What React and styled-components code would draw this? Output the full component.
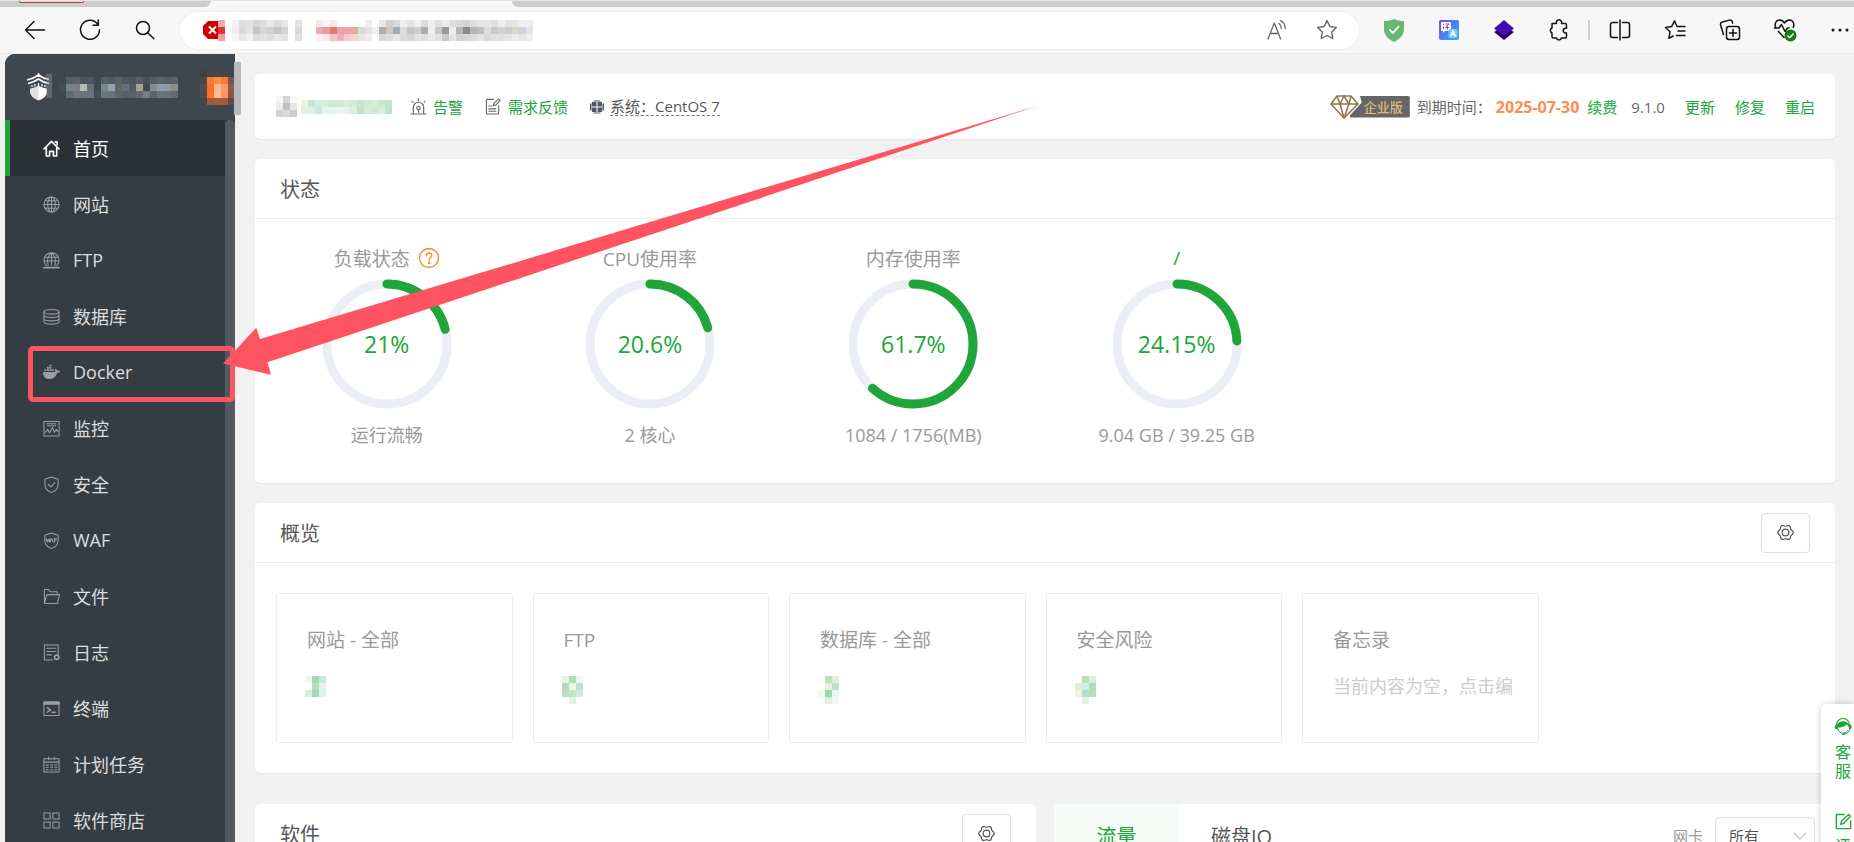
import React, { useState } from 'react';
import styled, { createGlobalStyle } from 'styled-components';

const GREEN = '#20a53a';
const MARK = '#ff5362';

// small colour grids used where names and addresses are masked, '.' is an empty cell
const MASKS = {
  lock: [['#f2a9a9'], ['#dc3a3a'], ['#f0a0a0']],
  site: [
    ['#f2f2f2', '#dedede', '#e2e2e2', '#d6d6d6', '#dcdcdc', '#e8e8e8', '#dcdcdc', '#e6e6e6'],
    ['#ededed', '#dadada', '#e4e4e4', '#c4c4c4', '#d6d6d6', '#d0d0d0', '#c6c6c6', '#d2d2d2'],
    ['#f5f5f5', '#e6e6e6', '#f2f2f2', '#dcdcdc', '#e2e2e2', '#dedede', '#e8e8e8', '#e2e2e2'],
  ],
  bar: [['#e2e2e2'], ['#d8d8d8'], ['#e2e2e2']],
  url: [
    ['#fbe6e6', '#fdf3f3', '#fbe6e6', '.', '.', '.', '.', '#eeeeee', '.', '#e8e8e8', '#cfcfcf', '#d8d8d8', '#eeeeee', '#e4e4e4', '#f0f0f0', '#dcdcdc', '#eeeeee', '#e0e0e0', '#ececec', '#e0e0e0', '#dadada', '#d2d2d2', '#dedede', '#e4e4e4', '#e6e6e6', '#dedede', '#eeeeee', '#e2e2e2', '#e6e6e6', '#f0f0f0', '#ececf2'],
    ['#eeabab', '#e99c9c', '#e37a76', '#eca3a3', '#eba3a3', '#eda6a6', '#d9d9d9', '#e2e2e2', '#f0f0f0', '#b9aca4', '#c9c9c9', '#a4acb4', '#dadada', '#c4c4c4', '#d4cbc5', '#a5adb5', '#f3efe8', '#c8c8cc', '#9297a0', '#f3eee4', '#b4b6ba', '#888a93', '#b6b6b6', '#bfbfc2', '#dedede', '#c9c9c9', '#d2d2d2', '#cccccc', '#d8d8cf', '#cfd2dc', '#e2e2e8'],
    ['#fdf0f0', '#fbe6e6', '#f3c6c6', '#e9b2b6', '#f3cccc', '#f5d3d3', '#e6e6e6', '#ececec', '.', '#d6d6d6', '#dedede', '#e6e6e6', '#dadada', '#d4d4d4', '#e2e2e2', '#dedede', '#e8e8e8', '#e0e0e0', '#c8c8c8', '#e4e4e4', '#d2d2d2', '#d6d6d6', '#dcdcdc', '#e6e6e6', '#dadada', '#e2e2e2', '#e0e0e0', '#e4e4e4', '#ececec', '#e4e4ea', '#eeeeee'],
  ],
  panel: [
    ['.', '#535b63', '#5b626a', '#4b535c', '#4f575f', '.', '#565e66', '#4f5760', '#5a6168', '#4f575f', '#4c545c', '#565d65', '#4a525b', '#545b63', '#5a6169', '#555d65', '#5b6269'],
    ['#454d56', '#728690', '#7a8087', '#b7b9b5', '#686f77', '.', '#75888f', '#92a4ae', '#62645f', '#64707c', '#525a63', '#a5a199', '#414a53', '#8a8b91', '#8d9dab', '#909a9f', '#898e89'],
    ['.', '#5b6a73', '#6f7680', '#6c7379', '#6c727b', '#454d56', '#687980', '#6b757b', '#5f6772', '#555f69', '#5a6269', '#626970', '#757c85', '#5b636b', '#67757d', '#68727a', '#64696c'],
  ],
  badge: [
    ['#3f4349', '#474549', '#474549', '#474549', '#3f434a'],
    ['#4a474a', '#fb7a35', '#ff8d4a', '#fd7a33', '#75544a'],
    ['#5c4b47', '#ff6e24', '#ffb78f', '#fc9c66', '#8c5c46'],
    ['#544a48', '#fd7128', '#ffbc97', '#ff9558', '#8c5a44'],
    ['#42454a', '#9c5a3c', '#a45b3a', '#a25b3c', '#5f4c47'],
  ],
  user: [
    ['#f6f6f6', '#d4d4d4', '#f8f8f8'],
    ['#ececec', '#c0c0c0', '#e8e8e8'],
    ['#d2d2d2', '#dadada', '#cccccc'],
  ],
  account: [
    ['#e8f3e4', '#c4e6cf', '#d3eee2', '#d3ecdc', '#cfead4', '#d3ead9', '#d8eedd', '#d3ead9', '#c8e6ce', '#cfe9d2', '#d4ecd9', '#cde8d0', '#c2e4cf'],
    ['#e3f1dc', '#dff1e6', '#cbe9dc', '#e2f3e8', '#e9f5ec', '#eaf5ec', '#e6f3e8', '#dceede', '#bfe2c2', '#d6ecda', '#cde9d4', '#d8eedd', '#bce3cf'],
  ],
  sites: [['#f1f7ee', '#a9d9b3', '#c5e9db'], ['.', '#b9dfba', '#e0f3ec'], ['#e0edd6', '#a2dbb9', '#dff2ea']],
  ftp: [['#e6f2e2', '#b0dcb8', '#f0f9f6'], ['#b3ddba', '#f2f3e3', '#b7e4d0'], ['#bcdfba', '#c4e6c4', '#cdebe0'], ['.', '#e2f3e6', '.']],
  db: [['#fbfdfa', '#bce1bd', '#d9efe3'], ['.', '#e5f1dc', '#b9e2cb'], ['#f2f7ea', '#9bd5aa', '#eaf7f0'], ['#fafcf8', '#dcf0df', '#f0faf5']],
  risk: [['#fdfdfb', '#b9dfbb', '#d7efe3'], ['#e0edd2', '#d0edea', '#b1dcbb'], ['#ebf3e0', '#b4e2c9', '#b5dfbb'], ['.', '#e1f2e3', '#f9fdfb']],
};

const Mask = ({ name }) => {
  const rows = MASKS[name];
  return (
    <svg width={rows[0].length * 7} height={rows.length * 7} shapeRendering="crispEdges" aria-hidden="true">
      {rows.map((row, y) =>
        row.map((c, x) => c !== '.' && <rect key={`${x}-${y}`} x={x * 7} y={y * 7} width="7" height="7" fill={c} />)
      )}
    </svg>
  );
};

const Icon = ({ size = 18, width = 1.2, box = 18, children }) => (
  <svg
    width={size}
    height={size}
    viewBox={`0 0 ${box} ${box}`}
    fill="none"
    stroke="currentColor"
    strokeWidth={width}
    strokeLinecap="round"
    strokeLinejoin="round"
    aria-hidden="true"
  >
    {children}
  </svg>
);

const STAR = 'M11 1.6l2.9 5.9 6.5.9-4.7 4.6 1.1 6.5-5.8-3-5.8 3 1.1-6.5L1.6 8.4l6.5-.9z';

// six rounded teeth around the centre of an 18px box
const GEAR = Array.from({ length: 72 }, (_, i) => {
  const a = (i * Math.PI) / 36;
  const r = 7.4 + 0.8 * Math.cos(6 * a);
  return `${(9 + r * Math.cos(a)).toFixed(2)},${(9 + r * Math.sin(a)).toFixed(2)}`;
}).join(' ');

const BackIcon = () => (
  <Icon size={22} box={22} width={1.5}><path d="M20.5 11H1.5M10 2.5L1.5 11l8.5 8.5" /></Icon>
);
const ReloadIcon = () => (
  <Icon size={22} box={22} width={1.5}><path d="M18.7 5.2A9.5 9.5 0 1 0 20.5 11M19.3 1v5.2h-5.2" /></Icon>
);
const SearchIcon = () => (
  <Icon size={20} box={20} width={1.5}><circle cx="8" cy="8" r="6.5" /><path d="M12.8 12.8l6 6" /></Icon>
);
const StopIcon = () => (
  <svg width="15" height="20" viewBox="0 0 15 20" aria-hidden="true">
    <path d="M5 1h10v18H5L0 14V6z" fill="#cc0000" />
    <path d="M6 6.5l7 7M13 6.5l-7 7" stroke="#fff" strokeWidth="2" />
  </svg>
);
const ReadIcon = () => (
  <Icon size={22} box={22} width={1.3}>
    <path d="M2 20L8.3 4l6.3 16M4.2 14.5h8.2M13 4.5a6 6 0 0 1 2.3 5M14.5 1.5a9.5 9.5 0 0 1 4.7 8" />
  </Icon>
);
const StarIcon = () => (
  <Icon size={22} box={22} width={1.4}><path d={STAR} /></Icon>
);
const ShieldIcon = () => (
  <svg width="20" height="24" viewBox="0 0 20 24" aria-hidden="true">
    <path d="M10 1C7 2.5 4 3 0 3v8c0 6 4 10 10 13 6-3 10-7 10-13V3C16 3 13 2.5 10 1z" fill="#66b873" />
    <path d="M5.5 11.5l3.5 3.5 6-7" fill="none" stroke="#fff" strokeWidth="1.8" />
  </svg>
);
const TranslateIcon = () => (
  <svg width="20" height="20" viewBox="0 0 20 20" aria-hidden="true">
    <defs>
      <linearGradient id="tr" x1="0" y1="0" x2="1" y2="1">
        <stop offset="0" stopColor="#7a48e8" />
        <stop offset="1" stopColor="#22b8fa" />
      </linearGradient>
    </defs>
    <rect width="20" height="20" rx="2" fill="url(#tr)" />
    <path d="M3 2h8q1 0 1 1v7q0 1-1 1H6l-2 2v-2H3q-1 0-1-1V3q0-1 1-1z" fill="#fff" />
    <path d="M4 4.500h1M4.500 6.500v2.500M6.500 4h3.500l-3 2.500M6.500 7.500H10M8.300 6v3.500" stroke="#8b3fe0" fill="none" />
    <rect x="9.500" y="9" width="9" height="9" rx="1.500" fill="#7cc4f8" />
    <path d="M11.500 16.500l2.500-6 2.500 6M12.500 14.500h3" stroke="#fff" strokeWidth="1.300" fill="none" />
  </svg>
);
const LayersIcon = () => (
  <svg width="20" height="20" viewBox="0 0 20 20" aria-hidden="true">
    <path d="M0 12l10-6 10 6-10 8z" fill="#1b0570" />
    <path d="M10 0l10 8.500L10 16 0 8.500z" fill="#470ab0" />
  </svg>
);
const PuzzleIcon = () => (
  <Icon size={22} box={22} width={1.5}>
    <path d="M4 4.500h4.500a2.700 2.700 0 1 1 5 0H17a1.500 1.500 0 0 1 1.500 1.500v3.300h-1a2.300 2.300 0 0 0 0 4.600h1v3.600a1.500 1.500 0 0 1-1.500 1.500h-3.500a2.600 2.600 0 0 1-5 0H5.500A1.500 1.500 0 0 1 4 17.500V14a2.700 2.700 0 0 1 0-5z" />
  </Icon>
);
const SplitIcon = () => (
  <Icon size={22} box={22} width={1.5}>
    <path d="M8.500 3.500H3.500a2 2 0 0 0-2 2v11a2 2 0 0 0 2 2h5M13.500 3.500h5a2 2 0 0 1 2 2v11a2 2 0 0 1-2 2h-5M11 1v20" />
  </Icon>
);
const FavIcon = () => (
  <Icon size={22} box={22} width={1.5}>
    <path d="M13 7.500L10.500 1.800 7.600 7.600 1.500 8.500l4.500 4.300-1.100 6.500 4.300-2.300M13 7.500h8M14 12h7M12.500 16.500h8.500" />
  </Icon>
);
const CollectIcon = () => (
  <Icon size={22} box={22} width={1.5}>
    <path d="M4.500 15.500L1.600 6a2.500 2.500 0 0 1 1.700-3l7-1.900a2.500 2.500 0 0 1 3 1.700l.3 1.200" />
    <rect x="7.500" y="7.500" width="13" height="13" rx="2.500" />
    <path d="M14 10.500v7M10.500 14h7" />
  </Icon>
);
const HealthIcon = () => (
  <svg width="24" height="24" viewBox="0 0 24 24" fill="none" stroke="#111" strokeWidth="1.5" strokeLinejoin="round" aria-hidden="true">
    <path d="M3 10C1 6 3 2 6.500 2 9 2 10.500 3.500 11.500 5 12.500 3.500 14 2 16.500 2 20 2 22 6 20 10M1 10h5l2.500-3.500 3.500 7 2.500-3.500h2M5 13l6.500 7" />
    <circle cx="17.500" cy="17.500" r="6" fill="#107c10" stroke="none" />
    <path d="M14.500 17.500l2.200 2.200 3.800-4.200" stroke="#fff" />
  </svg>
);
const MoreIcon = () => (
  <svg width="18" height="4" viewBox="0 0 18 4" fill="#111" aria-hidden="true">
    <circle cx="2" cy="2" r="1.5" /><circle cx="9" cy="2" r="1.5" /><circle cx="16" cy="2" r="1.5" />
  </svg>
);

const LogoIcon = () => (
  <svg width="25" height="28" viewBox="0 0 25 28" aria-hidden="true">
    <path d="M3 12v7q0 5 8.500 8.500Q20 24 20 19v-7z" fill="#e2e2e4" />
    <path d="M11.500 12H20v7q0 5-8.500 8.500z" fill="#fff" />
    <path d="M0 7.500Q7 6 11.500 2.500 16 6 22 7M1 11q6.500-1.500 10.500-4.500Q16 10 22 11M3 14q5-1 8.500-3.500Q15 13 20 14" fill="none" stroke="#3e464f" strokeWidth="3.500" />
    <path d="M0 7Q7 5.500 11.500 2 16 5.500 22 6.500M1 10.500Q7.500 9 11.500 6 16 9.500 22 10.500" fill="none" stroke="#fff" strokeWidth="1.600" />
    <path d="M11.500 0v4" stroke="#fff" strokeWidth="1.5" />
    <path d="M5 12v2M8 11v2.500M11.500 10v3M15 11v2.500M18 12v2" stroke="#fff" strokeWidth="1.300" />
    <path d="M19 1h6v24h-6z" fill="#8b9097" opacity=".45" />
  </svg>
);

const MENU_ICONS = {
  home: <path d="M1 9.500L9 1.500l8 8M3.500 8.500V17h3.500v-5h4v5h3.500V8.500M13 2h2v3" strokeWidth="1.700" />,
  site: <><circle cx="9" cy="9" r="8" /><ellipse cx="9" cy="9" rx="4" ry="8" /><path d="M9 1v16M1 9h16M2.500 5h13M2.500 13h13" /></>,
  ftp: <><path d="M3.500 14.500a8 8 0 1 1 11 0M5.500 14.500C4 8 6 3 9 1M12.500 14.500C14 8 12 3 9 1M9 1v13M1.500 9.500h15M2.500 5.500h13" /><path d="M1 16.500h16" strokeWidth="1.800" /></>,
  db: <><ellipse cx="9" cy="4" rx="8" ry="2.500" /><path d="M1 4v10.500C1 18 17 18 17 14.500V4M1 7.500C1 11 17 11 17 7.500M1 11c0 3.500 16 3.500 16 0" /></>,
  docker: (
    <path
      d="M0 8.500h12.500c.8-.4.600-2 0-2.800 1-1 2.200.2 2.300 1.400 1-.3 2.400 0 3.200.6-.5 1.200-1.700 1.600-3 1.600C13.500 13.500 11 16 7 16 2.500 16 0 13.500 0 8.500zM1.500 5.500h2v2h-2zM4.200 5.500h2v2h-2zM6.900 5.500h2v2h-2zM9.500 5.500h2v2h-2zM4.200 3h2v2h-2zM6.900 3h2v2h-2zM6.900 .8h2v1.700h-2z"
      fill="currentColor"
      stroke="none"
    />
  ),
  monitor: <><rect x="1" y="1.500" width="16" height="15.500" /><path d="M4.500 4h9M4.500 6h9M2.500 13l2.500-3 2 3.500 3-5.500 2 5 2-3 2 2.500" /></>,
  safe: <><path d="M9 1l7 2.500v6c0 4-3.500 6.500-7 8-3.500-1.500-7-4-7-8v-6z" /><path d="M5.500 9l3 2.500 4-4.500" /></>,
  waf: <><path d="M9 1l7 2.500v6c0 4-3.500 6.500-7 8-3.500-1.500-7-4-7-8v-6z" /><path d="M3.500 7l1 3.500L5.500 8l1 2.500 1-3.500M7.500 10.500L9 7l1.500 3.500M12 10.500V7h2.300M12 8.800h2" /></>,
  file: <path d="M1.500 16.500v-15H6l1.500 2.500H15v3M1.500 16.500L4 7h13.500l-2.300 9.500z" />,
  log: <><path d="M10 17H1.500V1H16v9.500M4 4.500h9.500M4 8h9.500M4 11.500h5" /><circle cx="14.500" cy="14" r="2.300" strokeWidth="1.800" /></>,
  term: <><path d="M1 2h16v14.500H1z" /><path d="M1.500 3.500h15" strokeWidth="3" /><path d="M4.500 8l3.500 2.500L4.500 13M9.500 13h3.500" strokeWidth="1.5" /></>,
  cron: <><path d="M1 3h16v14H1zM1 6.500h16M6 1v3M12 1v3" /><path d="M3 9.500h3M7.500 9.500h3M12 9.500h3M3 12h3M7.500 12h3M12 12h3M3 14.500h3M7.500 14.500h3M12 14.500h3" strokeLinecap="butt" /></>,
  store: <path d="M1 1h6.500v6.500H1zM10.500 1H17v6.500h-6.500zM1 10.500h6.500V17H1zM10.500 10.500H17V17h-6.500z" />,
};

const AlarmIcon = () => (
  <Icon size={17}><path d="M3.500 16.500V10a5.500 5.500 0 0 1 11 0v6.500M1 17h16M9 .8v2M2 3.500l1 1M16 3.500l-1 1M9 12.500V15" /><circle cx="9" cy="10.500" r="1.800" /></Icon>
);
const FeedbackIcon = () => (
  <Icon size={17}><path d="M9 1.500H2.500a1 1 0 0 0-1 1v13.500a1 1 0 0 0 1 1h11a1 1 0 0 0 1-1V8M4 8.500h3.500M4 11.500h7.500M4 14h7.500M9 8l.5-2.500 5-4.500 1.500 1.500-4.500 5z" /></Icon>
);
const SystemIcon = () => (
  <svg width="14" height="14" viewBox="0 0 14 14" fill="#50575e" aria-hidden="true">
    <path d="M2 2h4.500v4.500H2zM7.500 2H12v4.500H7.500zM2 7.500h4.500V12H2zM7.500 7.500H12V12H7.500z" />
    <path d="M3.500 1.500V.5h7v1zM3.500 12.500v1h7v-1zM1.500 3.500H0v7h1.500zM12.500 3.500H14v7h-1.500z" />
  </svg>
);
const DiamondIcon = () => (
  <svg width="30" height="24" viewBox="0 0 30 24" fill="#fff" stroke="#8f7647" strokeWidth="1.5" strokeLinejoin="round" aria-hidden="true">
    <path d="M7 1h14l7 8-14 14L1 9z" />
    <path d="M1 9h27M7 1l3 8 4 14 5-14 2-8M10 9l4-8 5 8" fill="none" />
  </svg>
);
const HelpIcon = () => (
  <Icon size={22} box={22} width={1.3}>
    <circle cx="11" cy="11" r="9.500" />
    <path d="M8.300 8.800c0-3.800 5.500-3.600 5.500-.3 0 2-2.700 2.200-2.700 4.500" />
    <circle cx="11.100" cy="15.800" r=".6" fill="currentColor" />
  </Icon>
);
const GearIcon = () => (
  <Icon size={17} width={1.3}>
    <polygon points={GEAR} />
    <circle cx="9" cy="9" r="3.500" />
  </Icon>
);
const ServiceIcon = () => (
  <svg width="18" height="18" viewBox="0 0 18 18" aria-hidden="true">
    <path d="M2.500 7a6.500 6.500 0 0 1 13 0" fill="none" stroke={GREEN} strokeWidth="1.200" />
    <path d="M3 6.500C5 2 13 2 15 6.500l2 .5q1.500 2 0 4h-2c0-2-1-3.500-2-4.500-3 2.500-6 3-9 3v1.500H1.500Q0 9 1.500 7z" fill={GREEN} />
    <path d="M4 11c1 5.500 8 5.500 10 1M15.500 11c0 3-2 4.500-5 5" fill="none" stroke={GREEN} />
    <circle cx="9.500" cy="16" r="1.300" fill={GREEN} />
  </svg>
);
const EditIcon = () => (
  <Icon size={17} width={1.5}><path d="M9.500 1.500h-8v15h15v-8M6 12l1-3.500 7.500-7 2 2-7.500 7.500zM6 12l2-.5" /></Icon>
);

const menu = [
  { key: 'home', label: '首页' },
  { key: 'site', label: '网站' },
  { key: 'ftp', label: 'FTP' },
  { key: 'db', label: '数据库' },
  { key: 'docker', label: 'Docker', marked: true },
  { key: 'monitor', label: '监控' },
  { key: 'safe', label: '安全' },
  { key: 'waf', label: 'WAF' },
  { key: 'file', label: '文件' },
  { key: 'log', label: '日志' },
  { key: 'term', label: '终端' },
  { key: 'cron', label: '计划任务' },
  { key: 'store', label: '软件商店' },
];

const gauges = [
  { label: '负载状态', value: 21, note: '运行流畅', help: true },
  { label: 'CPU使用率', value: 20.6, note: '2 核心' },
  { label: '内存使用率', value: 61.7, note: '1084 / 1756(MB)' },
  { label: '/', value: 24.15, note: '9.04 GB / 39.25 GB', green: true },
];

const overview = [
  { title: '网站 - 全部', mask: 'sites' },
  { title: 'FTP', mask: 'ftp' },
  { title: '数据库 - 全部', mask: 'db' },
  { title: '安全风险', mask: 'risk' },
];

const Ring = ({ value }) => {
  const len = 2 * Math.PI * 60;
  return (
    <svg width="130" height="130" viewBox="0 0 130 130" fill="none" strokeWidth="9" aria-hidden="true">
      <circle cx="65" cy="65" r="60" stroke="#ebeef5" />
      <circle
        cx="65"
        cy="65"
        r="60"
        stroke={GREEN}
        strokeLinecap="round"
        strokeDasharray={`${(len * value) / 100} ${len}`}
        transform="rotate(-90 65 65)"
      />
    </svg>
  );
};

export default function App() {
  const [active, setActive] = useState('home');
  const [tab, setTab] = useState('flow');

  return (
    <Page>
      <GlobalStyle />
      <TabStrip>
        <InactiveTab $side="left"><TabGroup /></InactiveTab>
        <InactiveTab $side="right" />
      </TabStrip>
      <Toolbar>
        <ToolButton aria-label="Back"><BackIcon /></ToolButton>
        <ToolButton aria-label="Reload"><ReloadIcon /></ToolButton>
        <ToolButton aria-label="Search"><SearchIcon /></ToolButton>
        <AddressBar>
          <MaskGroup><StopIcon /><Mask name="lock" /></MaskGroup>
          <Mask name="site" />
          <Mask name="bar" />
          <UrlMask><Mask name="url" /></UrlMask>
          <AddressActions>
            <SmallButton aria-label="Read aloud"><ReadIcon /></SmallButton>
            <SmallButton aria-label="Favorite"><StarIcon /></SmallButton>
          </AddressActions>
        </AddressBar>
        <ToolButton aria-label="Shield"><ShieldIcon /></ToolButton>
        <ToolButton aria-label="Translate"><TranslateIcon /></ToolButton>
        <ToolButton aria-label="Layers"><LayersIcon /></ToolButton>
        <ToolButton aria-label="Extensions"><PuzzleIcon /></ToolButton>
        <Separator />
        <ToolButton aria-label="Split screen"><SplitIcon /></ToolButton>
        <ToolButton aria-label="Favorites"><FavIcon /></ToolButton>
        <ToolButton aria-label="Collections"><CollectIcon /></ToolButton>
        <ToolButton aria-label="Browser essentials"><HealthIcon /></ToolButton>
        <MoreButton aria-label="More"><MoreIcon /></MoreButton>
      </Toolbar>

      <Body>
        <Sidebar>
          <SideHeader>
            <LogoIcon />
            <Mask name="panel" />
            <BadgeMask><Mask name="badge" /></BadgeMask>
            <SideThumb />
          </SideHeader>
          <SideScroll>
            <Menu>
              {menu.map((item) => (
                <li key={item.key}>
                  <MenuLink href={`#${item.key}`} $active={active === item.key} onClick={() => setActive(item.key)}>
                    <Icon size={17} width={1.1}>{MENU_ICONS[item.key]}</Icon>
                    {item.label}
                    {item.marked && <Highlight />}
                  </MenuLink>
                </li>
              ))}
            </Menu>
            <ScrollTrack />
          </SideScroll>
        </Sidebar>

        <Main>
          <InfoBar>
            <Account>
              <Mask name="user" />
              <Mask name="account" />
            </Account>
            <InfoLink href="#alarm"><AlarmIcon /><span>告警</span></InfoLink>
            <InfoLink href="#feedback"><FeedbackIcon /><span>需求反馈</span></InfoLink>
            <InfoItem><SystemIcon /><Dashed>系统：CentOS 7</Dashed></InfoItem>
            <License>
              <DiamondIcon />
              <Edition>企业版</Edition>
            </License>
            <Expire>到期时间：</Expire>
            <ExpireDate>2025-07-30</ExpireDate>
            <RenewLink href="#renew">续费</RenewLink>
            <Version>9.1.0</Version>
            <ActionLink href="#update">更新</ActionLink>
            <ActionLink href="#repair">修复</ActionLink>
            <ActionLink href="#restart">重启</ActionLink>
          </InfoBar>

          <Card>
            <CardHeader><CardTitle>状态</CardTitle></CardHeader>
            <Gauges>
              {gauges.map((g) => (
                <Gauge key={g.label}>
                  <GaugeLabel $green={g.green}>
                    {g.label}
                    {g.help && <HelpIcon />}
                  </GaugeLabel>
                  <Dial>
                    <Ring value={g.value} />
                    <Percent>{g.value}%</Percent>
                  </Dial>
                  <GaugeNote>{g.note}</GaugeNote>
                </Gauge>
              ))}
            </Gauges>
          </Card>

          <Card>
            <CardHeader>
              <CardTitle>概览</CardTitle>
              <GearButton aria-label="概览设置"><GearIcon /></GearButton>
            </CardHeader>
            <Tiles>
              {overview.map((o) => (
                <Tile key={o.title}>
                  <TileTitle>{o.title}</TileTitle>
                  <TileMask><Mask name={o.mask} /></TileMask>
                </Tile>
              ))}
              <Tile>
                <TileTitle>备忘录</TileTitle>
                <Memo>当前内容为空，点击编</Memo>
              </Tile>
            </Tiles>
          </Card>

          <BottomRow>
            <Card>
              <CardHeader>
                <CardTitle>软件</CardTitle>
                <GearButton aria-label="软件设置"><GearIcon /></GearButton>
              </CardHeader>
            </Card>
            <Card>
              <TabHeader>
                <TabButton $active={tab === 'flow'} onClick={() => setTab('flow')}>流量</TabButton>
                <TabButton $active={tab === 'disk'} onClick={() => setTab('disk')}>磁盘IO</TabButton>
                <NetLabel htmlFor="net">网卡</NetLabel>
                <SelectBox>
                  <NetSelect id="net"><option>所有</option></NetSelect>
                  <Icon size={14} width={1.5}><path d="M1.500 5l7.500 8 7.500-8" /></Icon>
                </SelectBox>
              </TabHeader>
            </Card>
          </BottomRow>
        </Main>
      </Body>

      <FloatPanel>
        <FloatLink href="#service"><ServiceIcon /><span>客服</span></FloatLink>
        <FloatLink href="#review"><EditIcon /><span>评价</span></FloatLink>
      </FloatPanel>

      <Pointer width="814" height="269" viewBox="0 0 814 269" aria-hidden="true">
        <path d="M0 257.500L33.300 221.700 37 233 814 0 44.500 256.300 48 268.700z" fill={MARK} />
      </Pointer>
    </Page>
  );
}

const GlobalStyle = createGlobalStyle`
  * {
    box-sizing: border-box;
  }
  body {
    margin: 0;
    background: #f1f1f1;
    color: #666;
    font-family: "Open Sans", "Noto Sans CJK SC", sans-serif;
    font-size: 15px;
    overflow: hidden;
  }
  button, select {
    font-family: inherit;
    cursor: pointer;
  }
  a {
    text-decoration: none;
  }
  svg {
    display: block;
    flex: none;
  }
`;

const Page = styled.div`
  position: relative;
  display: flex;
  flex-direction: column;
  height: 100vh;
  overflow: hidden;
`;

const TabStrip = styled.div`
  display: flex;
  flex: none;
  justify-content: space-between;
  height: 7px;
  background: #f7f7f7;
  border-top: 1px solid #e4e4e4;
`;

const InactiveTab = styled.div`
  width: ${({ $side }) => ($side === 'left' ? '211px' : 'calc(100% - 512px)')};
  padding-left: 19px;
  background: #cdcdcd;
  border-radius: ${({ $side }) => ($side === 'left' ? '0 0 8px 0' : '0 0 0 8px')};
`;

const TabGroup = styled.div`
  width: 65px;
  height: 2px;
  background: #f0dedd;
  border: 1px solid #b93a30;
  border-top: 0;
  border-radius: 0 0 6px 6px;
`;

const Toolbar = styled.div`
  display: flex;
  flex: none;
  align-items: center;
  height: 47px;
  padding-left: 7px;
  background: #f7f7f7;
  border-bottom: 1px solid #ececec;
`;

const ToolButton = styled.button`
  display: flex;
  flex: none;
  align-items: center;
  justify-content: center;
  width: 55px;
  height: 40px;
  padding: 0;
  color: #111;
  background: none;
  border: 0;
`;

const MoreButton = styled(ToolButton)`
  margin-right: -13px;
`;

const SmallButton = styled(ToolButton)`
  width: 50px;
  height: 36px;
  color: #666;
`;

const Separator = styled.div`
  width: 2px;
  height: 20px;
  margin: 0 2px;
  background: #cfcfcf;
`;

const AddressBar = styled.div`
  display: flex;
  flex: 1;
  align-items: center;
  gap: 7px;
  height: 37px;
  margin: 0 7px 0 8px;
  padding-left: 23px;
  background: #fff;
  border-radius: 19px;
  box-shadow: 0 0 3px rgba(0, 0, 0, 0.08);
`;

const MaskGroup = styled.div`
  display: flex;
  align-items: center;
`;

const UrlMask = styled.div`
  margin-left: 7px;
`;

const AddressActions = styled.div`
  display: flex;
  margin-left: auto;
  padding-right: 7px;
`;

const Body = styled.div`
  display: flex;
  flex: 1;
  min-height: 0;
`;

const Sidebar = styled.nav`
  display: flex;
  flex: none;
  flex-direction: column;
  width: 230px;
  margin-left: 5px;
  color: #e0e1e2;
  background: #353d44;
  border-radius: 10px 0 0 0;
`;

const SideHeader = styled.div`
  position: relative;
  display: flex;
  flex: none;
  align-items: center;
  gap: 7px;
  height: 66px;
  padding-left: 22px;
  background: #3e464f;
  border-radius: 10px 0 0 0;
`;

const BadgeMask = styled.div`
  margin-left: auto;
`;

const SideThumb = styled.div`
  position: absolute;
  top: 8px;
  right: -6px;
  width: 7px;
  height: 53px;
  background: #b5b8bc;
`;

const SideScroll = styled.div`
  display: flex;
  flex: 1;
  min-height: 0;
`;

const Menu = styled.ul`
  flex: 1;
  margin: 0;
  padding: 0;
  list-style: none;
`;

const ScrollTrack = styled.div`
  width: 10px;
  background: #535961;
  border-radius: 5px 5px 0 0;
`;

const MenuLink = styled.a`
  position: relative;
  display: flex;
  align-items: center;
  gap: 13px;
  height: 56px;
  padding-left: 33px;
  font-size: 18px;
  color: ${({ $active }) => ($active ? '#fff' : '#dcddde')};
  background: ${({ $active }) => ($active ? '#2c3138' : 'transparent')};
  border-left: 5px solid ${({ $active }) => ($active ? GREEN : 'transparent')};

  svg {
    color: ${({ $active }) => ($active ? '#fff' : '#9c9fa2')};
  }
`;

const Highlight = styled.span`
  position: absolute;
  top: 2px;
  right: -10px;
  bottom: -2px;
  left: 18px;
  z-index: 1;
  border: 5px solid ${MARK};
  border-radius: 5px;
`;

const Main = styled.main`
  flex: 1;
  min-width: 0;
  padding: 20px 19px 0 20px;
  overflow: hidden;
`;

const Card = styled.section`
  margin-bottom: 20px;
  background: #fff;
  border-radius: 5px;
  box-shadow: 0 1px 1px rgba(0, 0, 0, 0.05);
`;

const InfoBar = styled(Card)`
  display: flex;
  align-items: center;
  height: 65px;
  padding: 0 20px 0 21px;
`;

const Account = styled.div`
  display: flex;
  align-items: center;
  gap: 4px;
  margin-right: 18px;
`;

const InfoItem = styled.span`
  display: flex;
  align-items: center;
  gap: 6px;
  margin-right: 22px;
`;

const InfoLink = styled.a`
  display: flex;
  align-items: center;
  gap: 6px;
  margin-right: 22px;
  color: #666;

  span {
    color: ${GREEN};
  }
`;

const Dashed = styled.span`
  color: #555;
  line-height: 18px;
  border-bottom: 1px dashed #777;
`;

const License = styled.div`
  display: flex;
  align-items: center;
  margin-left: auto;
`;

const Edition = styled.span`
  height: 22px;
  margin-left: -10px;
  padding: 0 7px 0 14px;
  font-size: 13px;
  font-weight: 500;
  line-height: 22px;
  color: #dcb877;
  background: #666;
  border-radius: 0 2px 2px 0;
  clip-path: polygon(10px 0, 100% 0, 100% 100%, 0 100%, 0 20px, 12px 7px);
`;

const Expire = styled.span`
  margin-left: 7px;
`;

const ExpireDate = styled.span`
  margin-left: 4px;
  font-size: 16px;
  font-weight: 700;
  color: #ff8c53;
`;

const RenewLink = styled.a`
  margin: 0 14px 0 8px;
  font-weight: 500;
  color: #3fb157;
`;

const Version = styled.span`
  color: #666;
`;

const ActionLink = styled.a`
  margin-left: 20px;
  color: ${GREEN};
`;

const CardHeader = styled.header`
  display: flex;
  align-items: center;
  justify-content: space-between;
  height: 60px;
  padding: 0 25px;
  border-bottom: 1px solid #ececec;
`;

const CardTitle = styled.h2`
  margin: 0;
  font-size: 20px;
  font-weight: 400;
  color: #555;
`;

const Gauges = styled.div`
  display: grid;
  grid-template-columns: repeat(6, 1fr);
  padding: 25px 0 33px;
`;

const Gauge = styled.div`
  display: flex;
  flex-direction: column;
  align-items: center;
`;

const GaugeLabel = styled.div`
  display: flex;
  align-items: center;
  gap: 8px;
  height: 28px;
  font-size: 19px;
  color: ${({ $green }) => ($green ? GREEN : '#999')};

  svg {
    color: #f58b1f;
  }
`;

const Dial = styled.div`
  display: grid;
  place-items: center;
  margin: 7px 0 12px;

  > * {
    grid-area: 1 / 1;
  }
`;

const Percent = styled.span`
  font-size: 23px;
  color: ${GREEN};
`;

const GaugeNote = styled.div`
  margin-bottom: 1px;
  font-size: 18px;
  line-height: 28px;
  color: #999;
`;

const GearButton = styled.button`
  display: flex;
  align-items: center;
  justify-content: center;
  width: 49px;
  height: 40px;
  padding: 0;
  color: #555;
  background: #fff;
  border: 1px solid #dcdfe6;
  border-radius: 4px;
`;

const Tiles = styled.div`
  display: grid;
  grid-template-columns: repeat(6, 1fr);
  gap: 20px;
  padding: 30px 40px 30px 21px;
`;

const Tile = styled.div`
  height: 150px;
  padding: 32px 20px 0 30px;
  border: 1px solid #ececec;
  border-radius: 2px;
`;

const TileTitle = styled.div`
  font-size: 19px;
  line-height: 28px;
  color: #999;
`;

const TileMask = styled.div`
  margin: 22px 0 0 -2px;
`;

const Memo = styled.div`
  margin-top: 18px;
  font-size: 18px;
  line-height: 28px;
  color: #ccc;
  white-space: nowrap;
`;

const BottomRow = styled.div`
  display: grid;
  grid-template-columns: 1fr 1fr;
  gap: 18px;
  margin-top: 31px;

  ${Card} {
    height: 300px;
  }
`;

const TabHeader = styled.div`
  display: flex;
  align-items: center;
  height: 64px;
  padding-right: 20px;
  border-bottom: 1px solid #ececec;
`;

const TabButton = styled.button`
  width: 125px;
  height: 100%;
  padding: 0;
  font-size: 20px;
  color: ${({ $active }) => ($active ? GREEN : '#555')};
  background: ${({ $active }) => ($active ? '#f6fbf8' : 'transparent')};
  border: 0;
  border-radius: 5px 0 0 0;
`;

const NetLabel = styled.label`
  margin: 0 12px 0 auto;
  color: #999;
`;

const SelectBox = styled.div`
  display: grid;
  align-items: center;

  > * {
    grid-area: 1 / 1;
  }

  svg {
    justify-self: end;
    margin-right: 8px;
    color: #b8bcc4;
    pointer-events: none;
  }
`;

const NetSelect = styled.select`
  width: 100px;
  height: 38px;
  padding: 0 13px;
  font-size: 15px;
  color: #555;
  background: #fff;
  border: 1px solid #dcdfe6;
  border-radius: 4px;
  appearance: none;
`;

const FloatPanel = styled.aside`
  position: absolute;
  top: 704px;
  right: 0;
  z-index: 2;
  width: 33px;
  height: 240px;
  padding: 14px 2px 0 13px;
  background: #fff;
  border-radius: 5px 0 0 5px;
  box-shadow: 0 0 6px rgba(0, 0, 0, 0.2);
`;

const FloatLink = styled.a`
  display: flex;
  flex-direction: column;
  align-items: center;
  gap: 7px;
  margin-bottom: 32px;
  color: ${GREEN};

  span {
    width: 16px;
    font-size: 16px;
    line-height: 19px;
  }
`;

const Pointer = styled.svg`
  position: absolute;
  top: 106px;
  left: 223px;
  z-index: 3;
  pointer-events: none;
`;
